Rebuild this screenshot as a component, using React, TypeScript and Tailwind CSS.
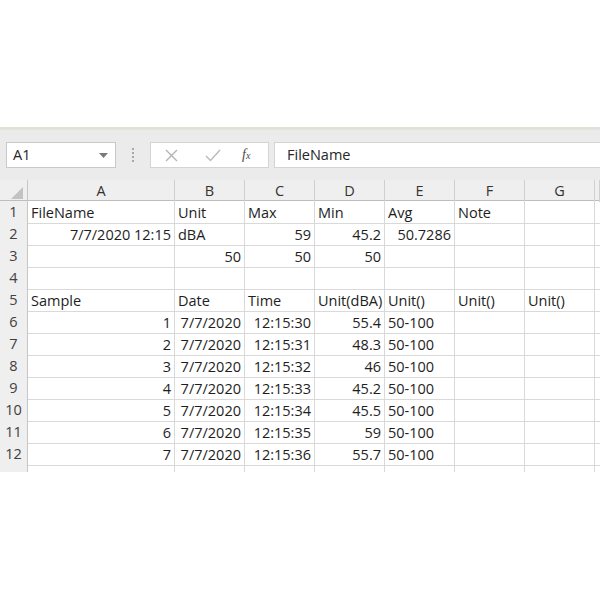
import React from 'react';

const COLS = ['A', 'B', 'C', 'D', 'E', 'F', 'G', ''];

type Cell = { v: string; r?: boolean };

// rows 1..12, columns A..G
const rows: (Cell | null)[][] = [
    [{ v: 'FileName' }, { v: 'Unit' }, { v: 'Max' }, { v: 'Min' }, { v: 'Avg' }, { v: 'Note' }, null],
    [{ v: '7/7/2020 12:15', r: true }, { v: 'dBA' }, { v: '59', r: true }, { v: '45.2', r: true }, { v: '50.7286', r: true }, null, null],
    [null, { v: '50', r: true }, { v: '50', r: true }, { v: '50', r: true }, null, null, null],
    [null, null, null, null, null, null, null],
    [{ v: 'Sample' }, { v: 'Date' }, { v: 'Time' }, { v: 'Unit(dBA)' }, { v: 'Unit()' }, { v: 'Unit()' }, { v: 'Unit()' }],
    ...[
        ['1', '12:15:30', '55.4'],
        ['2', '12:15:31', '48.3'],
        ['3', '12:15:32', '46'],
        ['4', '12:15:33', '45.2'],
        ['5', '12:15:34', '45.5'],
        ['6', '12:15:35', '59'],
        ['7', '12:15:36', '55.7'],
    ].map(([n, t, d]) => [
        { v: n, r: true },
        { v: '7/7/2020', r: true },
        { v: t, r: true },
        { v: d, r: true },
        { v: '50-100' },
        null,
        null,
    ] as (Cell | null)[]),
];

const gridCols = 'grid grid-cols-[28px_147px_70px_70px_70px_70px_70px_70px_1fr]';

const FormulaBar = () => (
    <div className="bg-[#ebebeb]">
        <div className="h-[2px] bg-[#e4e0d2]" />
        <div className="h-[1px] bg-[#e2e2e2]" />
        <div className="flex items-start pt-[12px] pb-[12px] pl-[6px] overflow-hidden">
            {/* Name box */}
            <div className="w-[110px] h-[26px] shrink-0 bg-white border border-[#c9c9c9] flex items-center justify-between pl-[6px] pr-[7px] text-[14.5px] text-[#262626]">
                <span>A1</span>
                <svg width="9" height="5" viewBox="0 0 9 5"><path d="M0 0h9L4.5 5z" fill="#7a7a7a" /></svg>
            </div>
            {/* grip dots */}
            <div className="w-[34px] h-[26px] shrink-0 flex flex-col items-center justify-center gap-[2px]">
                {[0, 1, 2, 3].map(i => (
                    <div key={i} className="w-[2px] h-[2px] bg-[#a8a8a8]" />
                ))}
            </div>
            {/* cancel / enter / fx */}
            <div className="w-[119px] h-[26px] shrink-0 bg-white border border-[#d4d4d4] flex items-center">
                <svg className="ml-[14px]" width="13" height="13" viewBox="0 0 13 13">
                    <path d="M1 1l11 11M12 1L1 12" stroke="#b4b4b4" strokeWidth="1.4" />
                </svg>
                <svg className="ml-[27px]" width="16" height="13" viewBox="0 0 16 13">
                    <path d="M1 7l4.5 4.5L15 1" stroke="#bcbcbc" strokeWidth="1.5" fill="none" />
                </svg>
                <span className="ml-[21px] font-['Liberation_Serif',serif] italic text-[14px] text-[#4a4a4a] leading-none">
                    f<span className="text-[10px]">x</span>
                </span>
            </div>
            {/* formula input */}
            <div className="ml-[5px] w-[340px] h-[26px] shrink-0 bg-white border border-[#d4d4d4] flex items-center pl-[12px] text-[14.5px] text-[#262626]">
                FileName
            </div>
        </div>
    </div>
);

const Sheet = () => (
    <div className="h-[292px] overflow-hidden bg-white">
        {/* column headers */}
        <div className={`${gridCols} h-[21px] bg-[#efefef] border-b border-[#bdbdbd]`}>
            <div className="border-r border-[#c6c6c6] flex items-end justify-end pr-[4px] pb-[3px]">
                <svg width="12" height="12" viewBox="0 0 12 12"><path d="M12 0v12H0z" fill="#c2c2c2" /></svg>
            </div>
            {COLS.map((c, i) => (
                <div key={i} className="border-r border-[#d0d0d0] flex items-center justify-center text-[14.5px] text-[#333]">
                    {c}
                </div>
            ))}
        </div>
        {/* rows */}
        {[...rows, null].map((row, ri) => (
            <div key={ri} className={`${gridCols} h-[22px]`}>
                <div className="bg-[#efefef] border-r border-b border-[#c6c6c6] border-b-[#d9d9d9] flex items-center justify-center text-[14.5px] text-[#404040]">
                    {row ? ri + 1 : ''}
                </div>
                {(row ?? [null, null, null, null, null, null, null]).concat([null]).map((cell, ci) => (
                    <div
                        key={ci}
                        className={`border-r border-b border-[#d9d9d9] flex items-center px-[3px] pt-[1px] text-[14.5px] text-[#1e1e1e] whitespace-nowrap overflow-hidden ${cell?.r ? 'justify-end' : 'justify-start'}`}
                    >
                        {cell?.v}
                    </div>
                ))}
            </div>
        ))}
    </div>
);

export default function App() {
    return (
        <div className="w-[600px] h-[600px] bg-white overflow-hidden font-['Open_Sans',sans-serif]">
            <div className="h-[127px]" />
            <FormulaBar />
            <Sheet />
        </div>
    );
}
